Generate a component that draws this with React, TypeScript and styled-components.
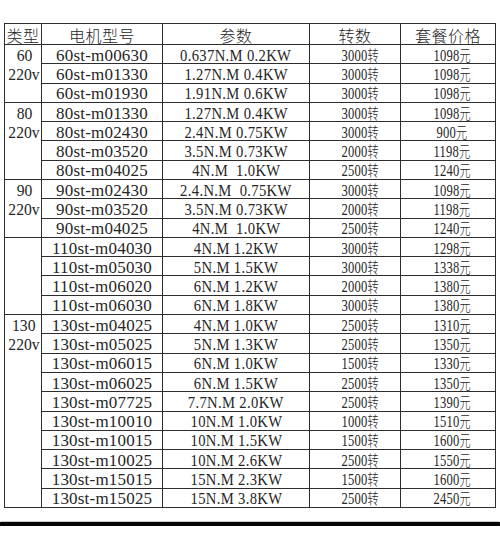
import React from 'react';
import styled, { createGlobalStyle } from 'styled-components';

// == data =========================================================================================
type Row = [ string, string, string, string ];

const groups: { labels: string[]; rows: Row[] }[] = [
  { labels: [ '60', '220v' ], rows: [
    [ '60st-m00630', '0.637N.M 0.2KW', '3000', '1098' ],
    [ '60st-m01330', '1.27N.M 0.4KW', '3000', '1098' ],
    [ '60st-m01930', '1.91N.M 0.6KW', '3000', '1098' ],
  ] },
  { labels: [ '80', '220v' ], rows: [
    [ '80st-m01330', '1.27N.M 0.4KW', '3000', '1098' ],
    [ '80st-m02430', '2.4N.M 0.75KW', '3000', '900' ],
    [ '80st-m03520', '3.5N.M 0.73KW', '2000', '1198' ],
    [ '80st-m04025', '4N.M  1.0KW', '2500', '1240' ],
  ] },
  { labels: [ '90', '220v' ], rows: [
    [ '90st-m02430', '2.4.N.M  0.75KW', '3000', '1098' ],
    [ '90st-m03520', '3.5N.M 0.73KW', '2000', '1198' ],
    [ '90st-m04025', '4N.M  1.0KW', '2500', '1240' ],
  ] },
  { labels: [], rows: [
    [ '110st-m04030', '4N.M 1.2KW', '3000', '1298' ],
    [ '110st-m05030', '5N.M 1.5KW', '3000', '1338' ],
    [ '110st-m06020', '6N.M 1.2KW', '2000', '1380' ],
    [ '110st-m06030', '6N.M 1.8KW', '3000', '1380' ],
  ] },
  { labels: [ '130', '220v' ], rows: [
    [ '130st-m04025', '4N.M 1.0KW', '2500', '1310' ],
    [ '130st-m05025', '5N.M 1.3KW', '2500', '1350' ],
    [ '130st-m06015', '6N.M 1.0KW', '1500', '1330' ],
    [ '130st-m06025', '6N.M 1.5KW', '2500', '1350' ],
    [ '130st-m07725', '7.7N.M 2.0KW', '2500', '1390' ],
    [ '130st-m10010', '10N.M 1.0KW', '1000', '1510' ],
    [ '130st-m10015', '10N.M 1.5KW', '1500', '1600' ],
    [ '130st-m10025', '10N.M 2.6KW', '2500', '1550' ],
    [ '130st-m15015', '15N.M 2.3KW', '1500', '1600' ],
    [ '130st-m15025', '15N.M 3.8KW', '2500', '2450' ],
  ] },
];

const headers = [ '类型', '电机型号', '参数', '转数', '套餐价格' ];

// == styles =======================================================================================
const GlobalStyle = createGlobalStyle`
  body {
    margin: 0;
    background: #fff;
  }
`;

const Page = styled.div`
  width: 500px;
  height: 539px;
  padding-top: 23px;
  box-sizing: border-box;
  background: #fff;
  overflow: hidden;
`;

const Grid = styled.div`
  display: grid;
  grid-template-columns: 36px 120px 146px 90px 94px;
  grid-template-rows: 20px repeat( 24, minmax( 0, 1fr ) );
  gap: 1px;
  width: 492px;
  height: 485px;
  margin-left: 4px;
  box-sizing: border-box;
  border: 1px solid #2d2d2d;
  background: #2d2d2d;
`;

const HeadCell = styled.div`
  display: flex;
  align-items: flex-end;
  justify-content: center;
  min-height: 0;
  background: #fff;
  color: #262626;
  font-family: "Noto Sans CJK SC", sans-serif;
  font-weight: 300;
  font-size: 16px;
  line-height: 1;
  letter-spacing: 0.5px;
  padding-bottom: 1px;
`;

const Cell = styled.div<{ $shift?: number }>`
  display: flex;
  align-items: center;
  justify-content: center;
  min-height: 0;
  padding: 2px 0 0 ${ ( p ) => p.$shift ?? 0 }px;
  background: #fff;
  color: #262626;
  white-space: pre;
  line-height: 1;
`;

const TypeCell = styled.div<{ $span: number }>`
  grid-column: 1;
  grid-row: span ${ ( p ) => p.$span };
  display: grid;
  grid-template-rows: repeat( ${ ( p ) => p.$span }, minmax( 0, 1fr ) );
  min-height: 0;
  background: #fff;
  color: #262626;
  line-height: 1;
`;

const TypeLabel = styled.div`
  display: flex;
  align-items: center;
  justify-content: center;
  padding: 2px 0 0 2px;
`;

// SimSun-like half-width text: thin serif, tall narrow glyphs
const Serif = styled.span<{ $sx?: number; $ls?: number }>`
  display: inline-block;
  font-family: "Liberation Serif", serif;
  font-size: 17px;
  line-height: 1;
  letter-spacing: ${ ( p ) => p.$ls ?? 0 }px;
  transform: scaleX( ${ ( p ) => p.$sx ?? 1 } );
`;

const Unit = styled.span`
  font-family: "Noto Sans CJK SC", sans-serif;
  font-weight: 300;
  font-size: 15px;
  line-height: 1;
  letter-spacing: 0;
`;

const Bar = styled.div`
  width: 500px;
  height: 4px;
  margin-top: 14px;
  background: #050505;
  box-shadow: 0 -2px 0 -1px #c8c8c8;
`;

// == component ====================================================================================
export default function App() {
  return <>
    <GlobalStyle />
    <Page>
      <Grid>
        { headers.map( ( h ) => <HeadCell key={ h }>{ h }</HeadCell> ) }
        { groups.map( ( g, gi ) => <React.Fragment key={ gi }>
          <TypeCell $span={ g.rows.length }>
            { g.labels.map( ( l ) => <TypeLabel key={ l }><Serif $sx={ 0.92 }>{ l }</Serif></TypeLabel> ) }
          </TypeCell>
          { g.rows.map( ( [ model, param, speed, price ] ) => <React.Fragment key={ model }>
            <Cell><Serif $ls={ 0.2 }>{ model }</Serif></Cell>
            <Cell><Serif $sx={ 0.86 } $ls={ 0.4 }>{ param }</Serif></Cell>
            <Cell $shift={ 10 }><Serif $sx={ 0.74 } $ls={ 0.3 }>{ speed }<Unit>转</Unit></Serif></Cell>
            <Cell $shift={ 8 }><Serif $sx={ 0.74 } $ls={ 0.3 }>{ price }<Unit>元</Unit></Serif></Cell>
          </React.Fragment> ) }
        </React.Fragment> ) }
      </Grid>
      <Bar />
    </Page>
  </>;
}
